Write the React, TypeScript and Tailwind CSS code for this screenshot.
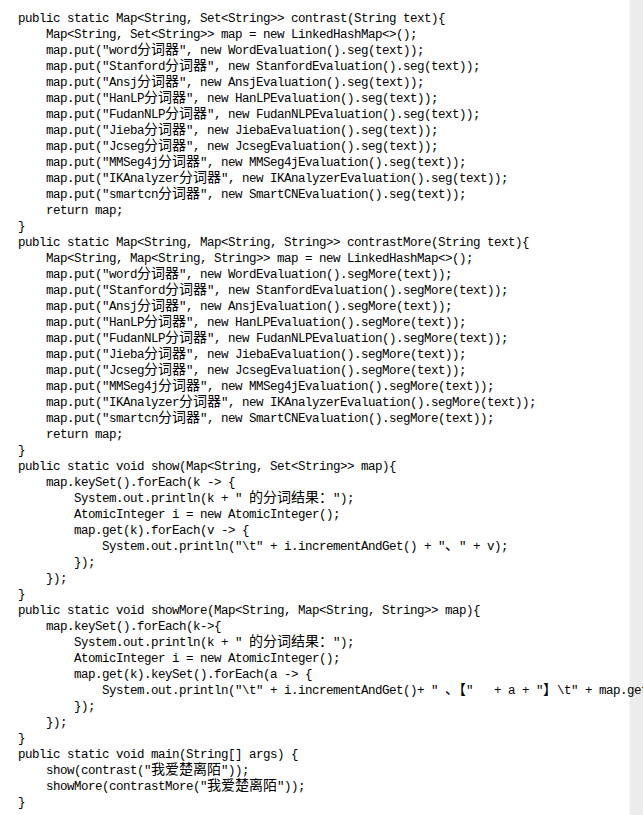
import React from 'react';

const seggers: [string, string][] = [
  ['word', 'WordEvaluation'],
  ['Stanford', 'StanfordEvaluation'],
  ['Ansj', 'AnsjEvaluation'],
  ['HanLP', 'HanLPEvaluation'],
  ['FudanNLP', 'FudanNLPEvaluation'],
  ['Jieba', 'JiebaEvaluation'],
  ['Jcseg', 'JcsegEvaluation'],
  ['MMSeg4j', 'MMSeg4jEvaluation'],
  ['IKAnalyzer', 'IKAnalyzerEvaluation'],
  ['smartcn', 'SmartCNEvaluation'],
];

const puts = (method: string) =>
  seggers.map(([name, cls]) => `    map.put("${name}分词器", new ${cls}().${method}(text));`);

const lines: string[] = [
  'public static Map<String, Set<String>> contrast(String text){',
  '    Map<String, Set<String>> map = new LinkedHashMap<>();',
  ...puts('seg'),
  '    return map;',
  '}',
  'public static Map<String, Map<String, String>> contrastMore(String text){',
  '    Map<String, Map<String, String>> map = new LinkedHashMap<>();',
  ...puts('segMore'),
  '    return map;',
  '}',
  'public static void show(Map<String, Set<String>> map){',
  '    map.keySet().forEach(k -> {',
  '        System.out.println(k + " 的分词结果：");',
  '        AtomicInteger i = new AtomicInteger();',
  '        map.get(k).forEach(v -> {',
  '            System.out.println("\\t" + i.incrementAndGet() + "、" + v);',
  '        });',
  '    });',
  '}',
  'public static void showMore(Map<String, Map<String, String>> map){',
  '    map.keySet().forEach(k->{',
  '        System.out.println(k + " 的分词结果：");',
  '        AtomicInteger i = new AtomicInteger();',
  '        map.get(k).keySet().forEach(a -> {',
  '            System.out.println("\\t" + i.incrementAndGet()+ " 、【"   + a + "】\\t" + map.get(k).get(a));',
  '        });',
  '    });',
  '}',
  'public static void main(String[] args) {',
  '    show(contrast("我爱楚离陌"));',
  '    showMore(contrastMore("我爱楚离陌"));',
  '}',
];

// full-width runs get the CJK font at 14px, everything else is 7px-wide mono
const wide = /([\u3000-\u303f\u4e00-\u9fff\uff00-\uffef]+)/;

function CodeLine({ text }: { text: string }) {
  const parts = text.split(wide).filter(Boolean);
  return (
    <div className="h-4 leading-4 whitespace-pre">
      {parts.map((p, i) =>
        wide.test(p) ? (
          <span
            key={i}
            className="text-[14px] leading-4 tracking-normal font-['Noto_Sans_CJK_SC',sans-serif]"
          >
            {p}
          </span>
        ) : (
          <span
            key={i}
            className="text-[12.5px] leading-4 tracking-[-0.5px] font-['Liberation_Mono',monospace]"
          >
            {p}
          </span>
        )
      )}
    </div>
  );
}

export default function App() {
  return (
    <div className="w-[643px] h-[815px] bg-[#ececec] overflow-hidden">
      <div className="w-[630px] h-full bg-white border-r border-[#f7f7f7] pt-[8px] pl-[18px] text-black">
        {lines.map((l, i) => (
          <CodeLine key={i} text={l} />
        ))}
      </div>
    </div>
  );
}
